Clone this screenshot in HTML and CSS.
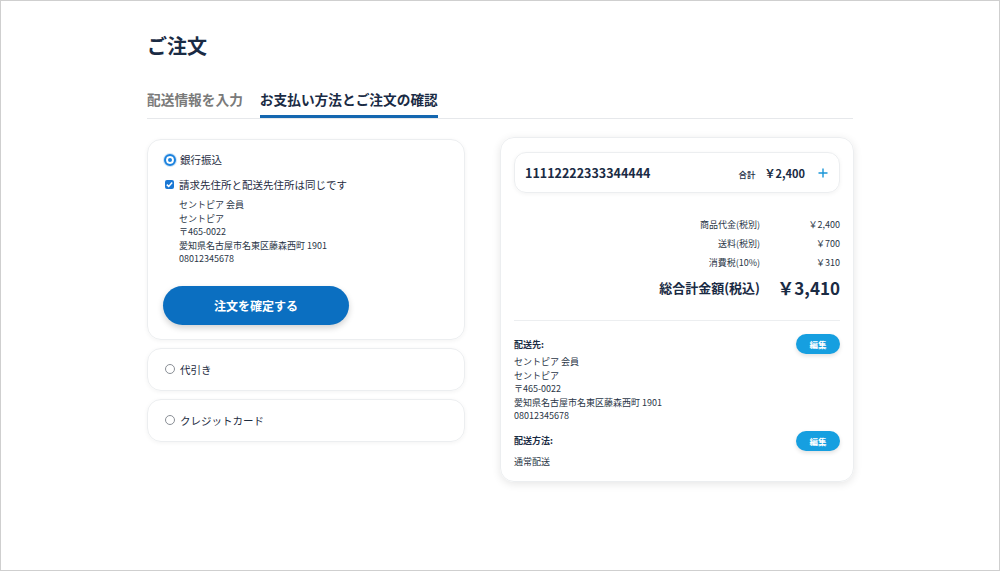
FILE: index.html
```html
<!DOCTYPE html>
<html lang="ja">
<head>
  <meta charset="utf-8">
  <title>ご注文</title>
  <link rel="stylesheet" href="styles.css">
</head>
<body>
  <div class="page">
    <h1 class="page-title">ご注文</h1>

    <div class="tabs">
      <div class="tab">配送情報を入力</div>
      <div class="tab tab-active">お支払い方法とご注文の確認</div>
    </div>

    <div class="columns">
      <div class="payments">
        <div class="pay-card">
          <label class="radio-row">
            <span class="radio radio-on"></span>銀行振込
          </label>
          <label class="check-row">
            <span class="check">
              <svg width="9" height="9" viewBox="0 0 9 9"><path d="M1.8 4.6 L3.7 6.4 L7.2 2.6" fill="none" stroke="#fff" stroke-width="1.5"/></svg>
            </span>請求先住所と配送先住所は同じです
          </label>
          <div class="address">
            <div>セントピア 会員</div>
            <div>セントピア</div>
            <div>〒465-0022</div>
            <div>愛知県名古屋市名東区藤森西町 1901</div>
            <div>08012345678</div>
          </div>
          <button class="confirm-button">注文を確定する</button>
        </div>

        <div class="pay-card pay-card-small">
          <label class="radio-row"><span class="radio"></span>代引き</label>
        </div>

        <div class="pay-card pay-card-small">
          <label class="radio-row"><span class="radio"></span>クレジットカード</label>
        </div>
      </div>

      <div class="summary-card">
        <div class="cart-box">
          <span class="cart-id">11112222333344444</span>
          <span class="cart-total"><small>合計</small>￥2,400</span>
          <svg class="cart-plus" width="10" height="10" viewBox="0 0 10 10"><path d="M5 0.5 V9.5 M0.5 5 H9.5" stroke="#1b96d8" stroke-width="1.4"/></svg>
        </div>

        <div class="totals">
          <span>商品代金(税別)</span><span>￥2,400</span>
          <span>送料(税別)</span><span>￥700</span>
          <span>消費税(10%)</span><span>￥310</span>
          <span class="grand-label">総合計金額(税込)</span><span class="grand-value">￥3,410</span>
        </div>

        <div class="divider"></div>

        <div class="info-head">
          <span>配送先:</span>
          <button class="edit-button">編集</button>
        </div>
        <div class="info-body">
          <div>セントピア 会員</div>
          <div>セントピア</div>
          <div>〒465-0022</div>
          <div>愛知県名古屋市名東区藤森西町 1901</div>
          <div>08012345678</div>
        </div>

        <div class="info-head info-head-second">
          <span>配送方法:</span>
          <button class="edit-button">編集</button>
        </div>
        <div class="info-body info-body-last">
          <div>通常配送</div>
        </div>
      </div>
    </div>
  </div>
</body>
</html>
```

FILE: styles.css
```css
html, body {
  margin: 0;
  padding: 0;
}

body {
  box-sizing: border-box;
  height: 571px;
  border: 1px solid #cfcfcf;
  background: #fff;
  color: #1e2c3f;
  font-family: "Noto Sans CJK JP", "Noto Sans", sans-serif;
}

.page {
  width: 706px;
  margin: 0 auto;
  padding-top: 30px;
}

.page-title {
  margin: 0;
  font-size: 20px;
  line-height: 30px;
  font-weight: 700;
  color: #1a2b44;
}

.tabs {
  display: flex;
  gap: 17px;
  margin-top: 28px;
  border-bottom: 1px solid #e6e8eb;
}

.tab {
  font-size: 13.7px;
  font-weight: 700;
  color: #7a7a7a;
  line-height: 20px;
  padding-bottom: 9px;
}

.tab-active {
  color: #1a2b44;
  box-shadow: inset 0 -3px 0 #1467b0;
}

.columns {
  display: grid;
  grid-template-columns: 318px 354px;
  column-gap: 35px;
  margin-top: 18px;
  align-items: start;
}

.payments {
  display: flex;
  flex-direction: column;
  gap: 8px;
  padding-top: 2px;
}

.pay-card {
  border: 1px solid #eceef0;
  border-radius: 14px;
  box-shadow: 0 1px 4px rgba(0, 0, 0, 0.05);
  padding: 11px 15px 14px 15px;
}

.pay-card-small {
  padding: 12px 15px;
}

.radio-row,
.check-row {
  display: flex;
  align-items: center;
  font-size: 10.5px;
  line-height: 17px;
  color: #1e2c3f;
}

.check-row {
  margin-top: 8px;
}

.radio {
  box-sizing: border-box;
  width: 10px;
  height: 10px;
  border: 1px solid #8a8f96;
  border-radius: 50%;
  margin-right: 5px;
  margin-left: 2px;
}

.radio-on {
  width: 12px;
  height: 12px;
  margin-left: 1px;
  margin-right: 4px;
  border: 2px solid #1b82de;
  background: #fff;
  box-shadow: inset 0 0 0 2px #fff, inset 0 0 0 6px #1b82de, 0 0 0 1px #cfe4f7;
}

.check {
  display: flex;
  align-items: center;
  justify-content: center;
  width: 9px;
  height: 9px;
  border-radius: 2px;
  background: #1b78d4;
  margin-left: 2px;
  margin-right: 5px;
}

.address {
  margin-top: 5px;
  padding-left: 16px;
  font-size: 9px;
  line-height: 13.5px;
  color: #2a3646;
}

.confirm-button {
  display: block;
  margin-top: 20px;
  width: 186px;
  height: 39px;
  border: none;
  border-radius: 20px;
  background: #0b6fc1;
  color: #fff;
  font-family: inherit;
  font-size: 12px;
  font-weight: 700;
  box-shadow: 0 3px 6px rgba(0, 0, 0, 0.18);
  cursor: pointer;
}

.summary-card {
  border: 1px solid #eceef0;
  border-radius: 14px;
  box-shadow: 0 2px 8px rgba(0, 0, 0, 0.1);
  padding: 14px 13px 13px 13px;
}

.cart-box {
  display: flex;
  align-items: center;
  height: 41px;
  box-sizing: border-box;
  border: 1px solid #eceef0;
  border-radius: 12px;
  box-shadow: 0 1px 4px rgba(0, 0, 0, 0.05);
  padding: 0 11px 0 10px;
}

.cart-id {
  flex: 1;
  font-size: 12.5px;
  font-weight: 700;
  color: #1a2b44;
}

.cart-total {
  font-size: 11px;
  font-weight: 700;
  color: #1a2b44;
}

.cart-total small {
  font-size: 8.5px;
  font-weight: 500;
  margin-right: 9px;
}

.cart-plus {
  margin-left: 13px;
}

.totals {
  display: grid;
  grid-template-columns: 1fr 62px;
  column-gap: 18px;
  justify-items: end;
  align-items: center;
  margin-top: 22px;
  font-size: 9px;
  line-height: 19px;
  color: #2a3646;
}

.grand-label {
  margin-top: 6px;
  font-size: 13px;
  font-weight: 700;
  color: #1a2b44;
}

.grand-value {
  margin-top: 6px;
  font-size: 17px;
  font-weight: 700;
  color: #1a2b44;
}

.divider {
  margin-top: 23px;
  border-top: 1px solid #eceef0;
}

.info-head {
  display: flex;
  justify-content: space-between;
  align-items: center;
  margin-top: 13px;
  font-size: 9px;
  font-weight: 700;
  color: #1a2b44;
}

.info-head-second {
  margin-top: 8px;
}

.edit-button {
  width: 44px;
  height: 20px;
  border: none;
  border-radius: 10px;
  background: #169fe0;
  color: #fff;
  font-family: inherit;
  font-size: 8.5px;
  font-weight: 700;
  box-shadow: 0 2px 4px rgba(0, 0, 0, 0.12);
}

.info-body {
  margin-top: 1px;
  font-size: 9px;
  line-height: 13.5px;
  color: #2a3646;
}

.info-body-last {
  margin-top: 4px;
}
```
